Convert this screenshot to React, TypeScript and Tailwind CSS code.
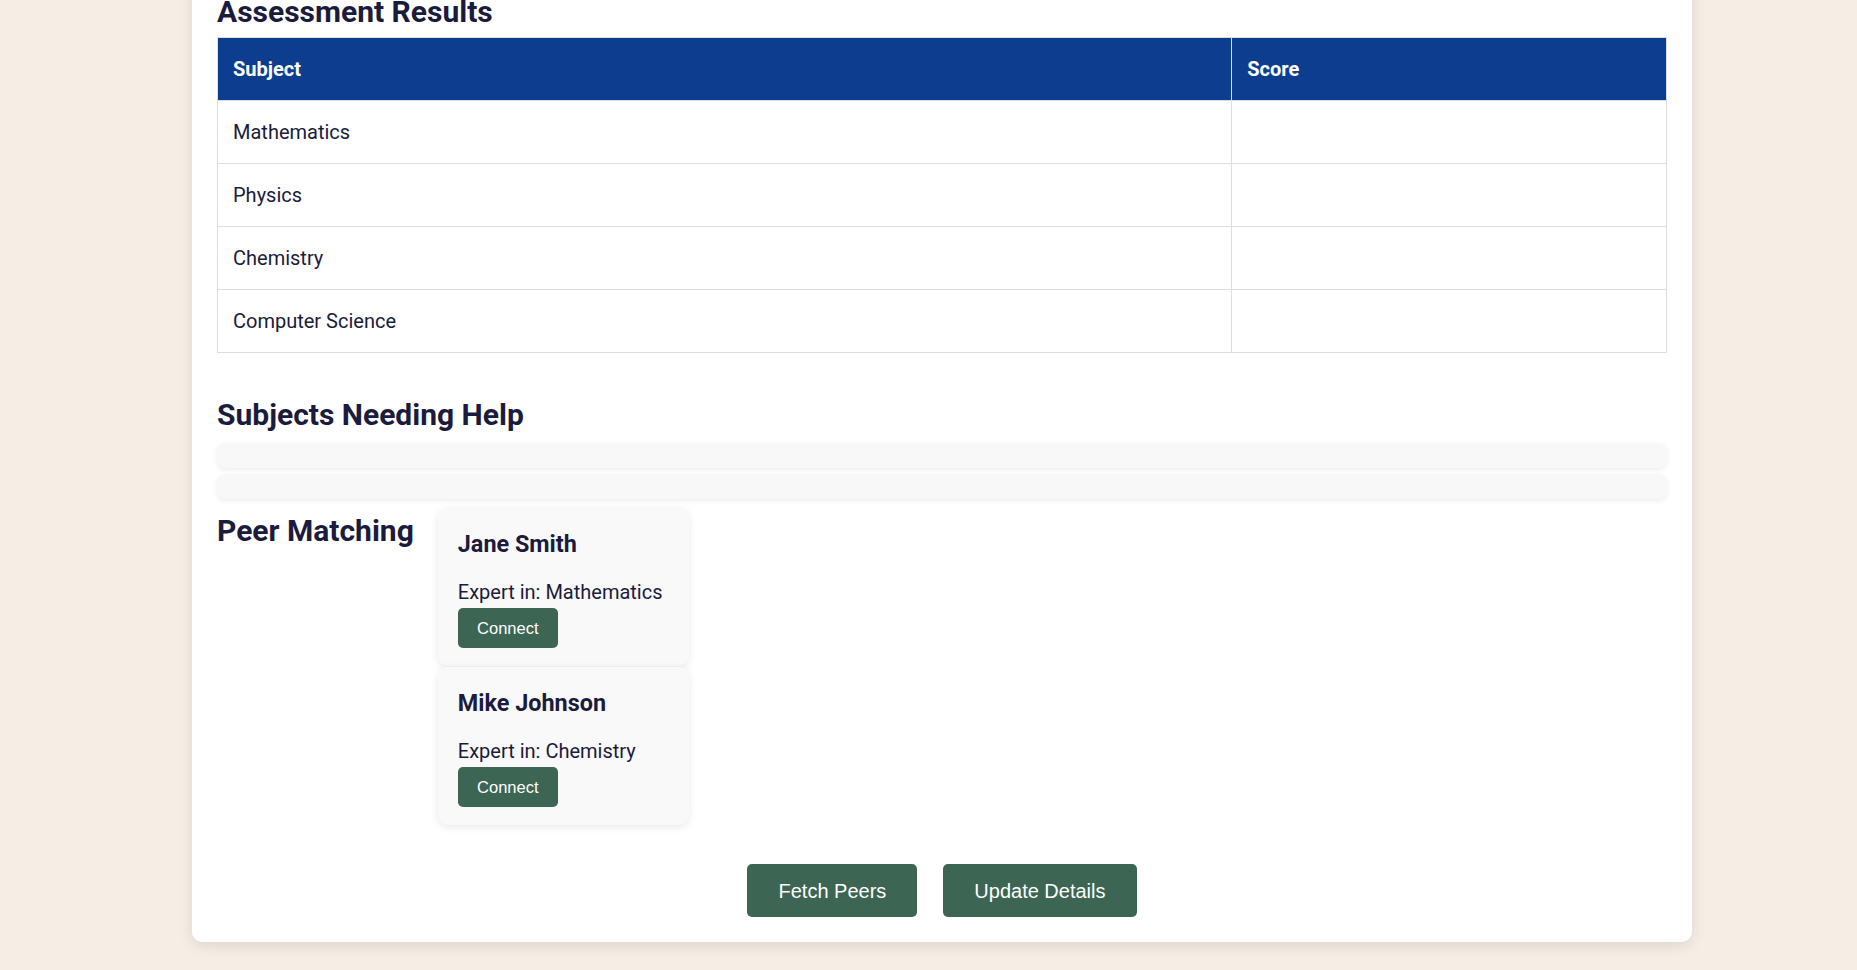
import React from 'react';

const subjects = ['Mathematics', 'Physics', 'Chemistry', 'Computer Science'];

const peers = [
  { name: 'Jane Smith', expertise: 'Mathematics' },
  { name: 'Mike Johnson', expertise: 'Chemistry' },
];

const PeerCard = ({ name, expertise }: { name: string; expertise: string }) => (
  <div className="w-[251px] bg-[#f9f9f9] rounded-[10px] px-5 pt-[23px] pb-[18px] shadow-[0_2px_8px_rgba(0,0,0,0.09)]">
    <h3 className="text-[23.4px] font-bold leading-[27px] mb-[23px]">{name}</h3>
    <p className="text-[20px] leading-[23px] mb-[4px] whitespace-nowrap">Expert in: {expertise}</p>
    <button className="w-[100px] h-10 rounded-[5px] bg-[#3c6553] text-white text-[16.5px] font-['Liberation_Sans',Arial,sans-serif]">
      Connect
    </button>
  </div>
);

export default function App() {
  return (
    <div className="h-[970px] overflow-hidden bg-[#f6eee5] flex flex-col justify-end pb-[28px] font-['Roboto',sans-serif] text-[#1b1b3d]">
      <div className="ml-[192px] w-[1500px] bg-white rounded-[10px] shadow-[0_4px_14px_rgba(0,0,0,0.1)] px-[25px] pt-[25px] pb-[25px]">
        <h2 className="text-[30px] font-bold leading-[35px] mb-[8px]">Assessment Results</h2>
        <table className="w-full border-collapse text-[20px]">
          <thead>
            <tr className="bg-[#0c3d8f] text-white">
              <th className="w-[70%] border border-[#dddddd] px-[15px] py-[19px] leading-[24px] text-left font-bold">Subject</th>
              <th className="border border-[#dddddd] px-[15px] py-[19px] leading-[24px] text-left font-bold">Score</th>
            </tr>
          </thead>
          <tbody>
            {subjects.map((s) => (
              <tr key={s}>
                <td className="border border-[#dddddd] px-[15px] py-[19px] leading-[24px]">{s}</td>
                <td className="border border-[#dddddd] px-[15px] py-[19px] leading-[24px]"></td>
              </tr>
            ))}
          </tbody>
        </table>

        <h2 className="text-[30px] font-bold leading-[35px] mt-[44px] mb-[11px]">Subjects Needing Help</h2>
        <div className="flex flex-col gap-[6px]">
          <div className="h-[25px] rounded-[8px] bg-[#f8f8f8] shadow-[0_2px_5px_rgba(0,0,0,0.07)]"></div>
          <div className="h-[25px] rounded-[8px] bg-[#f8f8f8] shadow-[0_2px_5px_rgba(0,0,0,0.07)]"></div>
        </div>

        <div className="flex items-start gap-[24px] mt-[9px]">
          <h2 className="text-[30px] font-bold leading-[35px] mt-[5px]">Peer Matching</h2>
          <div className="flex flex-col gap-[1px]">
            {peers.map((p) => (
              <PeerCard key={p.name} name={p.name} expertise={p.expertise} />
            ))}
          </div>
        </div>

        <div className="flex justify-center gap-[26px] mt-[39px]">
          <button className="h-[53px] px-[31px] rounded-[5px] bg-[#3c6553] text-white text-[20px] font-['Liberation_Sans',Arial,sans-serif]">
            Fetch Peers
          </button>
          <button className="h-[53px] px-[31px] rounded-[5px] bg-[#3c6553] text-white text-[20px] font-['Liberation_Sans',Arial,sans-serif]">
            Update Details
          </button>
        </div>
      </div>
    </div>
  );
}
